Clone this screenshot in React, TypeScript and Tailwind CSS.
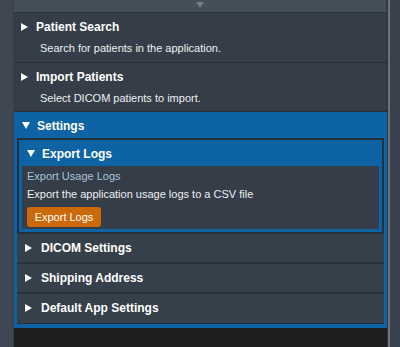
import React from "react";

const Right = ({ className = "" }: { className?: string }) => (
  <svg width="7" height="8" viewBox="0 0 7 8" className={className}>
    <path d="M0 0 L7 4 L0 8 Z" fill="#ffffff" />
  </svg>
);

const Down = ({ className = "" }: { className?: string }) => (
  <svg width="8" height="7" viewBox="0 0 8 7" className={className}>
    <path d="M0 0 L8 0 L4 7 Z" fill="#ffffff" />
  </svg>
);

function TopItem({ title, desc, h }: { title: string; desc: string; h: string }) {
  return (
    <div className={`${h} border-b border-[#272e36] flex flex-col`}>
      <div className="h-[26px] flex items-center pl-[7px] pt-[2px]">
        <Right />
        <span className="ml-[8px] text-[12px] font-bold text-white">{title}</span>
      </div>
      <div className="pl-[26px] pt-[1px] text-[11px] leading-[16px] text-[#eef0f2]">{desc}</div>
    </div>
  );
}

function SubRow({ title, last }: { title: string; last?: boolean }) {
  return (
    <div
      className={`h-[30px] flex items-center pl-[8px] pb-[1px] bg-[#36404a] ${
        last ? "border-b border-[#262d35]" : "border-b-2 border-[#2a323b]"
      }`}
    >
      <Right />
      <span className="ml-[9px] text-[12px] font-bold text-white">{title}</span>
    </div>
  );
}

export default function App() {
  return (
    <div
      className="w-[400px] h-[347px] flex overflow-hidden"
      style={{ fontFamily: '"Liberation Sans", Arial, sans-serif' }}
    >
      <div className="w-[14px] h-full bg-[#3e4752] border-r border-[#353d47]" />
      <div className="w-[373px] h-full flex flex-col bg-[#343d48]">
        <div className="h-[13px] bg-[#454f5a] border-b border-[#2a3139] flex justify-center items-start pt-[2px] mr-[1px]">
          <svg width="8" height="6" viewBox="0 0 8 6">
            <path d="M0 0 L8 0 L4 6 Z" fill="#737b84" />
          </svg>
        </div>
        <TopItem h="h-[50px]" title="Patient Search" desc="Search for patients in the application." />
        <TopItem h="h-[49px]" title="Import Patients" desc="Select DICOM patients to import." />
        <div className="bg-[#0d63a3] flex flex-col">
          <div className="h-[26px] flex items-center pl-[8px] pt-[1px]">
            <Down />
            <span className="ml-[7px] text-[12px] font-bold text-white">Settings</span>
          </div>
          <div className="px-[3px] pb-[4px] flex flex-col">
            <div className="border-2 border-[#26303b] bg-[#0d63a3] px-[3px] pb-[3px] flex flex-col">
              <div className="h-[26px] flex items-center pl-[5px] pt-[1px]">
                <Down />
                <span className="ml-[7px] text-[12px] font-bold text-white">Export Logs</span>
              </div>
              <div className="h-[63px] bg-[#343d48] pl-[5px] pt-[2px] flex flex-col">
                <div className="text-[11px] leading-[16px] text-[#a9c3da]">Export Usage Logs</div>
                <div className="mt-[2px] text-[11px] leading-[16px] text-[#eef0f2]">
                  Export the application usage logs to a CSV file
                </div>
                <div className="mt-[5px]">
                  <div className="w-[74px] h-[20px] rounded-[3px] bg-[#cc6a0b] flex items-center justify-center text-[11px] text-white">
                    Export Logs
                  </div>
                </div>
              </div>
            </div>
            <SubRow title="DICOM Settings" />
            <SubRow title="Shipping Address" />
            <SubRow title="Default App Settings" last />
          </div>
        </div>
        <div className="flex-1 bg-[#1e1f21]" />
      </div>
      <div className="w-[13px] h-full flex">
        <div className="w-[1px] bg-[#2b323a]" />
        <div className="w-[2px] bg-[#6c747d]" />
        <div className="flex-1 bg-[#3a434d]" />
      </div>
    </div>
  );
}
